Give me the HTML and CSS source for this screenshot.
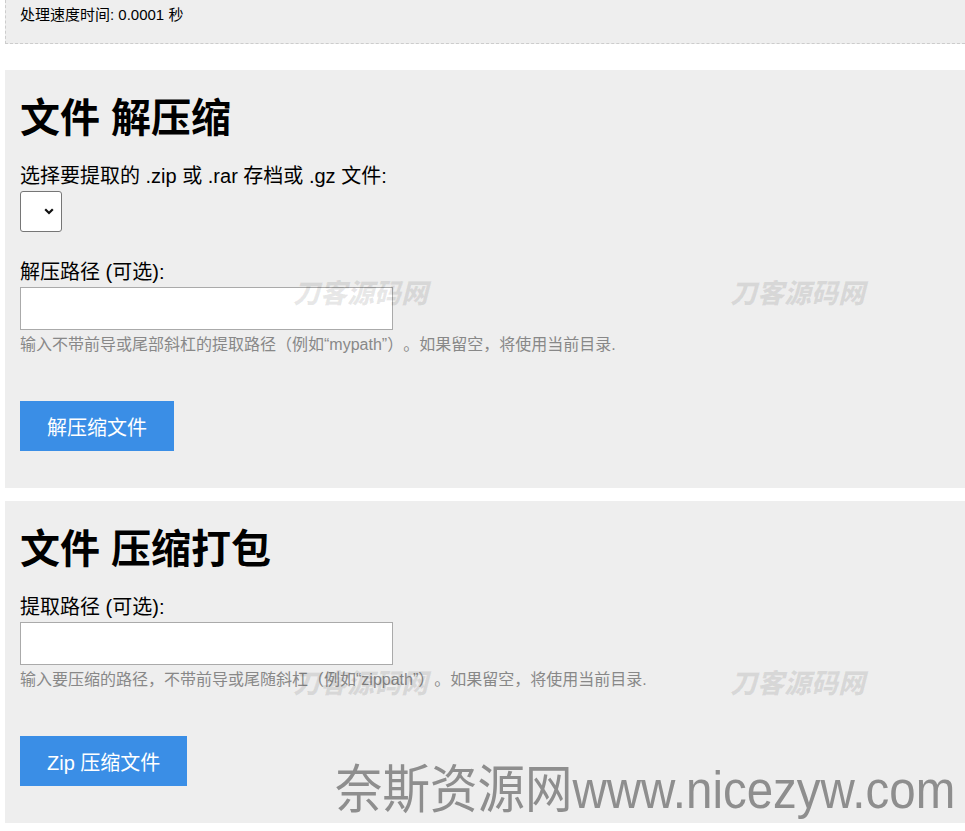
FILE: index.html
```html
<!DOCTYPE html>
<html lang="zh-CN">
<head>
    <meta charset="UTF-8">
    <meta name="viewport" content="width=device-width, initial-scale=1.0">
    <title>文件 解压缩 / 压缩打包</title>
    <link rel="stylesheet" href="styles.css">
</head>
<body>
<div class="page">
    <div class="status">处理速度时间: 0.0001 秒</div>

    <form class="panel">
        <h1>文件 解压缩</h1>
        <label class="field-label first" for="archive">选择要提取的 .zip 或 .rar 存档或 .gz 文件:</label>
        <span class="select-wrap">
            <select id="archive" class="select"></select>
            <svg class="chevron" width="10" height="7" viewBox="0 0 10 7"><path d="M1.2 1.2 L5 5 L8.8 1.2" fill="none" stroke="#111" stroke-width="2.2"/></svg>
        </span>
        <label class="field-label after-select" for="extpath">解压路径 (可选):</label>
        <input id="extpath" class="text-input" type="text">
        <p class="hint">输入不带前导或尾部斜杠的提取路径（例如“mypath”）。如果留空，将使用当前目录.</p>
        <button type="button" class="btn">解压缩文件</button>
    </form>

    <form class="panel">
        <h1>文件 压缩打包</h1>
        <label class="field-label first" for="zippath">提取路径 (可选):</label>
        <input id="zippath" class="text-input" type="text">
        <p class="hint">输入要压缩的路径，不带前导或尾随斜杠（例如“zippath”）。如果留空，将使用当前目录.</p>
        <button type="button" class="btn">Zip 压缩文件</button>
    </form>

    <!-- watermarks -->
    <span class="mark" style="left: 293px; top: 278px;">刀客源码网</span>
    <span class="mark" style="left: 730px; top: 278px;">刀客源码网</span>
    <span class="mark" style="left: 293px; top: 668px;">刀客源码网</span>
    <span class="mark" style="left: 730px; top: 668px;">刀客源码网</span>
    <span class="site-mark">奈斯资源网www.nicezyw.com</span>
</div>
</body>
</html>
```

FILE: styles.css
```css
body {
    margin: 0;
    padding: 0;
    background: #fff;
    color: #000;
    font-family: "Liberation Sans", "Noto Sans CJK SC", sans-serif;
    text-spacing-trim: space-all;
}
.page {
    position: relative;
    padding-left: 5px;
    height: 831px;
    overflow: hidden;
}
.status {
    background: #eee;
    border: 1px dashed #ccc;
    border-top: 0;
    border-right: 0;
    padding: 6px 14px 19px;
    font-size: 15px;
    line-height: 18px;
    margin-bottom: 26px;
}
.panel {
    background: #eee;
    padding: 27px 15px 37px;
    margin-bottom: 13px;
}
.panel h1 {
    font-size: 40px;
    line-height: 43px;
    font-weight: bold;
    margin: 0;
}
.field-label {
    display: block;
    font-size: 20px;
    line-height: 22px;
}
.field-label.first {
    margin-top: 25px;
}
.field-label.after-select {
    margin-top: 29px;
}
.select-wrap {
    position: relative;
    display: block;
    width: 42px;
    height: 41px;
    margin-top: 4px;
}
.select {
    -webkit-appearance: none;
    appearance: none;
    display: block;
    width: 42px;
    height: 41px;
    margin: 0;
    background: #fff;
    border: 1px solid #767676;
    border-radius: 3px;
    box-sizing: border-box;
}
.chevron {
    position: absolute;
    left: 24px;
    top: 17px;
    pointer-events: none;
}
.text-input {
    display: block;
    width: 373px;
    height: 43px;
    margin-top: 4px;
    box-sizing: border-box;
    border: 1px solid #aaa;
    background: #fff;
    font-size: 16px;
    padding: 0 8px;
}
.hint {
    margin: 5px 0 0;
    font-size: 16px;
    line-height: 19px;
    color: #888;
}
.btn {
    display: block;
    margin-top: 47px;
    height: 50px;
    padding: 0 27px;
    border: 0;
    background: #3a8ee6;
    color: #fff;
    font-family: inherit;
    font-size: 20px;
}
.mark {
    position: absolute;
    font-family: "Noto Sans CJK SC", sans-serif;
    font-size: 27px;
    line-height: 1;
    font-weight: 900;
    font-style: italic;
    color: rgba(0, 0, 0, 0.09);
    white-space: nowrap;
    pointer-events: none;
}
.site-mark {
    position: absolute;
    left: 335px;
    top: 764px;
    font-family: "Liberation Sans", "Noto Sans CJK SC", sans-serif;
    font-size: 47.5px;
    line-height: 1.2;
    color: #8e8e8e;
    white-space: nowrap;
    transform: scaleY(1.1);
    transform-origin: left bottom;
    pointer-events: none;
}
```
